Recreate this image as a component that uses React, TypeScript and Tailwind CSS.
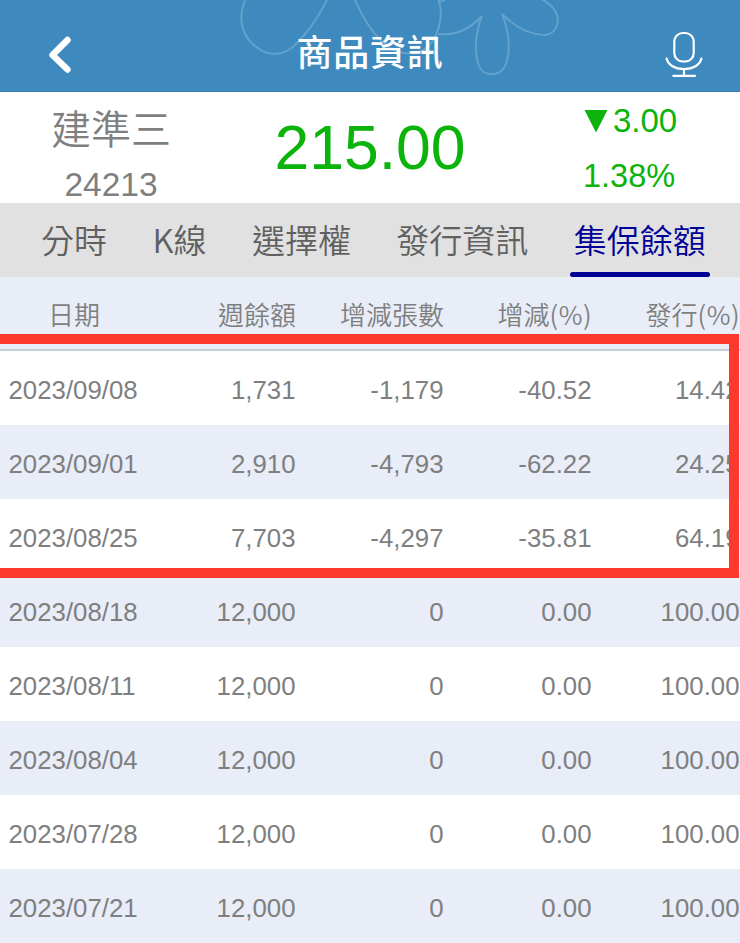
import React, { useState } from "react";

const tabs = ["分時", "K線", "選擇權", "發行資訊", "集保餘額"];

const columns = ["日期", "週餘額", "增減張數", "增減(%)", "發行(%)"];

const rows = [
  ["2023/09/08", "1,731", "-1,179", "-40.52", "14.42"],
  ["2023/09/01", "2,910", "-4,793", "-62.22", "24.25"],
  ["2023/08/25", "7,703", "-4,297", "-35.81", "64.19"],
  ["2023/08/18", "12,000", "0", "0.00", "100.00"],
  ["2023/08/11", "12,000", "0", "0.00", "100.00"],
  ["2023/08/04", "12,000", "0", "0.00", "100.00"],
  ["2023/07/28", "12,000", "0", "0.00", "100.00"],
  ["2023/07/21", "12,000", "0", "0.00", "100.00"],
];

function Header() {
  return (
    <header className="relative h-[92px] shrink-0 flex items-center justify-between bg-[#3e8abe] text-white border-b border-[#367fb2]">
      {/* petals behind the title */}
      <svg
        className="absolute inset-0"
        width="740"
        height="91"
        viewBox="0 0 740 91"
        fill="none"
        stroke="#62a2cd"
        strokeWidth="2"
      >
        <path d="M246 -2C238 16 240 34 255 46C267 56 281 57 294 46C308 33 320 14 328 -2" />
        <path d="M354 -2C361 14 370 30 382 42C398 57 422 57 432 42C442 26 443 12 438 -2" />
        <path d="M438 3C442 1 445 0 448 -2" />
        <path d="M438 34C456 36 470 29 482 16C472 42 474 75 491 74C511 76 513 42 502 14C515 27 530 35 545 35C559 33 561 17 553 8C550 4 545 1 540 -2" />
      </svg>
      <button className="relative ml-12 mt-[18px]">
        <svg width="24" height="38" viewBox="0 0 24 38" fill="none" stroke="#fff">
          <path
            d="M19.5 4L4.5 19L19.5 33.5"
            strokeWidth="6.4"
            strokeLinecap="round"
            strokeLinejoin="round"
          />
        </svg>
      </button>
      <h1 className="relative left-[2px] mt-[16px] text-[36px] leading-[40px] font-medium tracking-[0.8px]">
        商品資訊
      </h1>
      <button className="relative mr-9 mt-[16px]">
        <svg
          width="40"
          height="48"
          viewBox="0 0 40 48"
          fill="none"
          stroke="#fff"
          strokeWidth="2.2"
          strokeLinecap="round"
        >
          <rect x="10.3" y="3" width="19.4" height="28.5" rx="8.5" />
          <path d="M2.6 28.5C4 35 11 39 20 39C29 39 36 35 37.4 28.5M20 39V45.5M9.3 45.8H31" />
        </svg>
      </button>
    </header>
  );
}

function Quote() {
  return (
    <section className="h-[111px] shrink-0 grid grid-cols-[222px_296px_222px] bg-white">
      <div className="flex flex-col items-center text-[#7f7f7f]">
        <span className="mt-[17px] text-[40px] leading-[42px] font-[350]">建準三</span>
        <span className="mt-[16px] text-[33.5px] leading-[36px]">24213</span>
      </div>
      <div className="flex items-center justify-center text-[62.5px] leading-none text-[#0bb30b]">
        215.00
      </div>
      <div className="flex flex-col items-start pl-[65px] text-[33px] leading-[36px] text-[#0bb30b]">
        <div className="mt-[11px] flex items-center">
          <svg width="24" height="24" viewBox="0 0 24 24" className="ml-px mr-[5px]">
            <path d="M0.5 1H23.5L12 23.5Z" fill="#0bb30b" />
          </svg>
          <span>3.00</span>
        </div>
        <span className="mt-[19px] text-[32.5px]">1.38%</span>
      </div>
    </section>
  );
}

export default function App() {
  const [activeTab, setActiveTab] = useState(4);

  return (
    <div className="relative w-[740px] h-[943px] flex flex-col overflow-hidden bg-white font-['Liberation_Sans','Noto_Sans_CJK_TC',sans-serif]">
      <Header />
      <Quote />

      <nav className="h-[74px] shrink-0 flex gap-[45.4px] pl-[41px] bg-[#e1e1e1] text-[33px]">
        {tabs.map((tab, index) => {
          return (
            <button
              key={tab}
              onClick={() => setActiveTab(index)}
              className={`h-full flex flex-col items-center justify-between whitespace-nowrap font-[350] font-['Noto_Sans_CJK_TC',sans-serif] ${
                activeTab === index ? "text-[#000096]" : "text-[#606060]"
              }`}
            >
              <span className="mt-[16px] leading-[40px]">{tab}</span>
              {activeTab === index && (
                <span className="-mx-1 w-[140px] h-[5px] rounded-full bg-[#000096]" />
              )}
            </button>
          );
        })}
      </nav>

      <div className="h-[74px] shrink-0 grid grid-cols-5 items-center border-b-2 border-[#c5cdd2] bg-[#e8edf8] text-[26px] leading-[30px] text-[#7f7f7f] font-[350] font-['Noto_Sans_CJK_TC',sans-serif]">
        {columns.map((column, index) => {
          const [label, unit] = column.split("(");
          return (
            <span
              key={column}
              className={`mt-px whitespace-nowrap ${
                index === 0 ? "text-center" : "text-right"
              }`}
            >
              {label}
              {unit && <span className="tracking-[0.5px]">({unit}</span>}
            </span>
          );
        })}
      </div>

      <div className="flex flex-col">
        {rows.map((row) => {
          return (
            <div
              key={row[0]}
              className="h-[74px] shrink-0 grid grid-cols-5 items-center pt-1 text-[25.8px] leading-[30px] text-[#7f7f7f] odd:bg-white even:bg-[#e8edf8]"
            >
              {row.map((cell, index) => {
                return (
                  <span
                    key={index}
                    className={index === 0 ? "pl-[8.5px]" : "pr-[0.5px] text-right"}
                  >
                    {cell}
                  </span>
                );
              })}
            </div>
          );
        })}
      </div>

      {/* highlight over the latest three weeks */}
      <div className="absolute -left-3 top-[334px] w-[751px] h-[244px] border-10 border-[#fd392e] pointer-events-none" />
    </div>
  );
}
